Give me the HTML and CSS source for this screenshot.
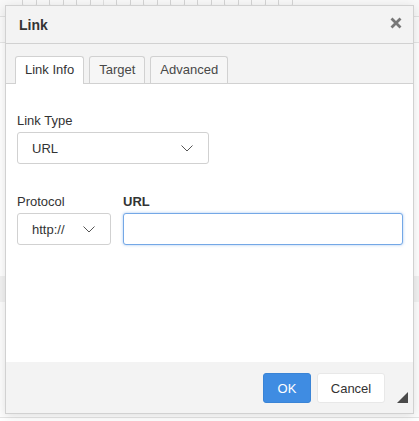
FILE: index.html
```html
<!DOCTYPE html>
<html>
<head>
<meta charset="utf-8">
<link rel="stylesheet" href="styles.css">
</head>
<body>
<div class="page">
  <div class="toolbar">
    <span class="tb-icon"></span><span class="tb-icon"></span><span class="tb-icon"></span>
    <span class="tb-sep"></span>
    <span class="tb-icon"></span><span class="tb-icon"></span><span class="tb-icon"></span><span class="tb-icon"></span><span class="tb-icon"></span><span class="tb-icon"></span><span class="tb-icon"></span>
  </div>
  <div class="toolbar2"></div>
  <div class="editor-area"></div>
  <div class="editor-band"></div>
  <div class="editor-area2"></div>
  <div class="status"></div>
</div>

<div class="dialog">
  <div class="dlg-header">
    <span class="dlg-title">Link</span>
    <span class="dlg-close">
      <svg width="12" height="12" viewBox="0 0 12 12"><path d="M1.5 1.5 L10.5 10.5 M10.5 1.5 L1.5 10.5" stroke="#777" stroke-width="2.8" stroke-linecap="butt" fill="none"/></svg>
    </span>
  </div>
  <div class="tabs">
    <div class="tab active">Link Info</div>
    <div class="tab">Target</div>
    <div class="tab">Advanced</div>
  </div>
  <div class="dlg-body">
    <div class="field">
      <label class="lbl">Link Type</label>
      <div class="select select-type">
        <span>URL</span>
        <svg class="chev" width="12" height="7" viewBox="0 0 12 7"><path d="M0.5 0.5 L6 6 L11.5 0.5" stroke="#555" stroke-width="1" fill="none"/></svg>
      </div>
    </div>
    <div class="row">
      <div class="field">
        <label class="lbl">Protocol</label>
        <div class="select select-proto">
          <span>http://</span>
          <svg class="chev" width="12" height="7" viewBox="0 0 12 7"><path d="M0.5 0.5 L6 6 L11.5 0.5" stroke="#555" stroke-width="1" fill="none"/></svg>
        </div>
      </div>
      <div class="field grow">
        <label class="lbl bold">URL</label>
        <div class="input focus"></div>
      </div>
    </div>
  </div>
  <div class="dlg-footer">
    <button class="btn btn-ok">OK</button>
    <button class="btn btn-cancel">Cancel</button>
  </div>
  <div class="grip"></div>
</div>
</body>
</html>
```

FILE: styles.css
```css
html, body {
  margin: 0;
  padding: 0;
}
body {
  width: 419px;
  height: 421px;
  overflow: hidden;
  background: #ffffff;
  font-family: "Liberation Sans", Arial, sans-serif;
  font-size: 13px;
  color: #333;
}
.page {
  display: flex;
  flex-direction: column;
  height: 421px;
}
.toolbar {
  height: 16px;
  background: #f8f8f8;
  border-bottom: 1px solid #e2e2e2;
  display: flex;
  align-items: flex-end;
  gap: 12px;
  padding-left: 22px;
  overflow: hidden;
}
.tb-icon {
  width: 13px;
  height: 13px;
  border: 1px solid #d4d4d4;
  margin-bottom: 9px;
  border-radius: 3px;
}
.tb-sep {
  width: 1px;
  height: 14px;
  background: #e0e0e0;
  margin-bottom: 3px;
}
.toolbar2 {
  height: 25px;
  background: #fbfbfb;
  border-bottom: 1px solid #e6e6e6;
}
.editor-area {
  height: 233px;
  background: #ffffff;
}
.editor-band {
  height: 26px;
  background: #f2f2f2;
}
.editor-area2 {
  height: 115px;
  background: #fdfdfd;
}
.status {
  flex: 1;
  border-top: 1px solid #e4e4e4;
  background: #ffffff;
}

.dialog {
  position: absolute;
  left: 5px;
  top: 5px;
  width: 407px;
  height: 407px;
  border: 1px solid #d1d1d1;
  background: #f3f3f3;
  box-shadow: 0 2px 10px rgba(0, 0, 0, 0.12);
  display: flex;
  flex-direction: column;
}
.dlg-header {
  height: 37px;
  border-bottom: 1px solid #d1d1d1;
  background: #f3f3f3;
  display: flex;
  align-items: center;
  justify-content: space-between;
  padding: 0 11px 0 13px;
  flex: none;
}
.dlg-title {
  font-weight: bold;
  font-size: 14px;
  color: #333;
}
.dlg-close {
  display: flex;
  width: 12px;
  height: 12px;
  margin-top: -3px;
}
.tabs {
  height: 27px;
  padding: 12px 0 0 9px;
  display: flex;
  gap: 5px;
  flex: none;
  position: relative;
  z-index: 1;
}
.tab {
  height: 26px;
  line-height: 26px;
  padding: 0 9px;
  border: 1px solid #d1d1d1;
  border-bottom: none;
  border-radius: 3px 3px 0 0;
  background: #f6f6f6;
  color: #484848;
  font-size: 13px;
}
.tab.active {
  background: #ffffff;
  height: 27px;
  color: #333;
}
.dlg-body {
  background: #ffffff;
  border-top: 1px solid #d1d1d1;
  height: 249px;
  padding: 29px 10px 0 11px;
  display: flex;
  flex-direction: column;
  flex: none;
}
.field {
  display: flex;
  flex-direction: column;
}
.field.grow {
  flex: 1;
}
.lbl {
  display: block;
  line-height: 16px;
  margin-bottom: 3px;
  color: #333;
}
.lbl.bold {
  font-weight: bold;
}
.select {
  box-sizing: border-box;
  height: 32px;
  border: 1px solid #d1d1d1;
  border-radius: 3px;
  background: #fff;
  display: flex;
  align-items: center;
  justify-content: space-between;
  padding: 0 15px 0 14px;
  color: #333;
}
.select-type {
  width: 192px;
}
.select-proto {
  width: 94px;
}
.chev {
  display: block;
  margin-top: 1px;
}
.row {
  display: flex;
  gap: 12px;
  margin-top: 30px;
}
.input {
  box-sizing: border-box;
  height: 32px;
  border: 1px solid #d1d1d1;
  border-radius: 3px;
  background: #fff;
}
.input.focus {
  border-color: #74a8e6;
  box-shadow: 0 0 3px rgba(90, 150, 225, 0.55);
}
.dlg-footer {
  flex: 1;
  display: flex;
  justify-content: flex-end;
  align-items: flex-start;
  gap: 6px;
  padding: 11px 28px 0 0;
  background: #f3f3f3;
}
.btn {
  box-sizing: border-box;
  height: 30px;
  border-radius: 3px;
  font-family: "Liberation Sans", Arial, sans-serif;
  font-size: 13px;
  padding: 0;
  margin: 0;
}
.btn-ok {
  width: 48px;
  background: #3f8ce2;
  border: 1px solid #3a84d6;
  color: #ffffff;
}
.btn-cancel {
  width: 68px;
  background: #ffffff;
  border: 1px solid #e8e8e8;
  color: #333;
}
.grip {
  position: absolute;
  right: 5px;
  bottom: 10px;
  width: 0;
  height: 0;
  border-left: 11px solid transparent;
  border-bottom: 11px solid #4a4a4a;
}
```
